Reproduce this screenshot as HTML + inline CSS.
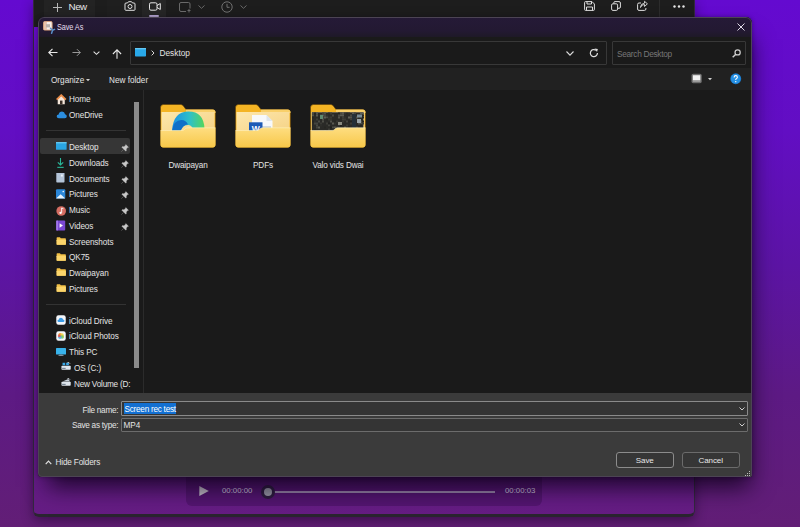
<!DOCTYPE html>
<html><head><meta charset="utf-8">
<style>
*{box-sizing:border-box;margin:0;padding:0}
html,body{width:800px;height:527px;overflow:hidden}
body{position:relative;font-family:"Liberation Sans",sans-serif;color:#e6e6e6;
background:linear-gradient(180deg,rgb(100,10,208) 0%,rgb(98,14,195) 25%,rgb(92,20,165) 50%,rgb(93,26,132) 75%,rgb(98,30,118) 100%)}
svg{position:absolute;overflow:visible}
.t{position:absolute;white-space:nowrap;font-size:8.2px;line-height:10px;color:#e4e4e4}
/* snip window */
#snip{position:absolute;left:33px;top:0;width:662px;height:517px;border-radius:0 0 6px 6px;
border:1px solid #33283f;border-bottom:3px solid #2a2530;border-top:0;box-shadow:0 4px 12px rgba(20,0,30,.45);background:rgba(120,25,180,.2)}
#snipbar{position:absolute;left:0;top:0;width:660px;height:27px;background:#1d1d1d}
#player{position:absolute;left:152px;top:460px;width:356px;height:46px;border-radius:6px;background:rgba(30,0,50,.25)}
/* dialog */
#dlg{position:absolute;left:38px;top:17px;width:714px;height:460px;border-radius:6px 6px 2px 4px;overflow:hidden;
background:#1b1b1b;box-shadow:0 0 4px rgba(10,0,20,.4),4px 16px 22px -6px rgba(10,0,20,.8)}
#dlg::after{content:"";position:absolute;left:0;top:0;right:0;bottom:0;border:1px solid #4c4454;border-radius:6px 6px 2px 4px;pointer-events:none}
#title{position:absolute;left:0;top:0;width:714px;height:20px;background:linear-gradient(180deg,#251a37 0%,#231932 70%,#1e1927 100%)}
#navrow{position:absolute;left:0;top:20px;width:714px;height:31px;background:#1a1a1a}
#toolrow{position:absolute;left:0;top:51px;width:714px;height:22px;background:#212121}
#pane{position:absolute;left:0;top:73px;width:105px;height:303px;background:#1a1a1a;overflow:hidden}
#content{position:absolute;left:105px;top:73px;width:609px;height:303px;background:#1a1a1a;border-left:1px solid #2b2b2b}
#bottom{position:absolute;left:0;top:376px;width:714px;height:84px;background:#3b3b3b}
.box{position:absolute;border:1px solid #383838;background:#1a1a1a;border-radius:1px}
.inp{position:absolute;border:1px solid #6c6c6c;background:#343434;border-radius:1px}
.btn{position:absolute;border:1px solid #6b6b6b;background:#363636;border-radius:3px;text-align:center;font-size:8px;letter-spacing:-0.1px;line-height:16px;color:#e8e8e8}
.row{position:absolute;left:0;width:93px;height:15px;overflow:hidden}
.row .ic{position:absolute;left:18px;top:2px}
.row .t{left:31px;top:2px;letter-spacing:-0.1px}
.pin{position:absolute;left:83px;top:3px}
.sep{position:absolute;left:8px;width:80px;height:1px;background:#333}
.fold{position:absolute;top:13.5px;width:56px;height:44px}
.fl{position:absolute;top:71.3px;width:75px;text-align:center;font-size:8.2px;letter-spacing:-0.15px;line-height:10px;color:#e4e4e4;white-space:nowrap}
</style></head><body>

<svg width="0" height="0" style="position:absolute">
 <defs>
  <linearGradient id="gfront" x1="0" y1="0" x2="0" y2="1"><stop offset="0" stop-color="#fedd80"/><stop offset="1" stop-color="#f7c849"/></linearGradient>
  <linearGradient id="gback" x1="0" y1="0" x2="1" y2="1"><stop offset="0" stop-color="#fde7ac"/><stop offset="1" stop-color="#f5d285"/></linearGradient>
  <linearGradient id="gedge" x1="0" y1="0" x2="1" y2="0"><stop offset="0" stop-color="#1b8fe6"/><stop offset=".55" stop-color="#2fc0c8"/><stop offset="1" stop-color="#55d65a"/></linearGradient>
  <symbol id="folderback" viewBox="0 0 56 44">
   <path d="M0.5,3.5 Q0.5,0.5 3.5,0.5 H20.5 Q22,0.5 23,1.5 L26,5.5 H52.5 Q55.5,5.5 55.5,8.5 V40 Q55.5,43.5 52.5,43.5 H3.5 Q0.5,43.5 0.5,40 Z" fill="#f4b424" stroke="#5a3c08" stroke-width=".6"/>
   <path d="M26,5.5 H52.5 Q55.5,5.5 55.5,8.5 V9 H26 Z" fill="#f9d06a"/>
   <rect x="1.5" y="8" width="53" height="22" fill="url(#gback)"/>
  </symbol>
  <symbol id="folderfront" viewBox="0 0 56 44">
   <path d="M0.5,26.5 H22 Q23.5,26.5 24.5,25.5 L25.5,24.5 Q26.5,23.8 28,23.8 H55.5 V40.5 Q55.5,43.5 52.5,43.5 H3.5 Q0.5,43.5 0.5,40.5 Z" fill="url(#gfront)"/>
   <path d="M0.5,26.5 H22 Q23.5,26.5 24.5,25.5 L25.5,24.5 Q26.5,23.8 28,23.8 H55.5" fill="none" stroke="#fff2c0" stroke-width=".6"/>
  </symbol>
 </defs>
</svg>

<div id="snip">
  <div id="snipbar">
    <div style="position:absolute;left:10px;top:0;width:51px;height:27px;background:#232323"></div>
    <div style="position:absolute;left:73px;top:0;width:35px;height:27px;background:#1f1f1f"></div>
    <div style="position:absolute;left:108px;top:0;width:24px;height:27px;background:#262626"></div>
    <!-- plus -->
    <svg style="left:19px;top:3px" width="9" height="9" viewBox="0 0 9 9"><path d="M4.5,0 V9 M0,4.5 H9" stroke="#b8b8b8" stroke-width="1"/></svg>
    <div class="t" style="left:34.5px;top:1px;font-size:9.8px;letter-spacing:-0.45px;line-height:12px;color:#e8e8e8">New</div>
    <!-- camera -->
    <svg style="left:90px;top:1px" width="12" height="10" viewBox="0 0 12 10"><path d="M1,3 Q1,2 2,2 H3.5 L4.5,0.7 H7.5 L8.5,2 H10 Q11,2 11,3 V8.5 Q11,9.3 10,9.3 H2 Q1,9.3 1,8.5 Z" fill="none" stroke="#e2e2e2" stroke-width="1"/><circle cx="6" cy="5.5" r="2" fill="none" stroke="#e2e2e2" stroke-width="1"/></svg>
    <!-- video -->
    <svg style="left:115px;top:2px" width="12" height="9" viewBox="0 0 12 9"><rect x="0.5" y="0.8" width="7.5" height="7.4" rx="1.4" fill="none" stroke="#e6e6e6" stroke-width="1"/><path d="M8,3.5 L11.3,1.5 V7.5 L8,5.5" fill="none" stroke="#e6e6e6" stroke-width="1"/></svg>
    <div style="position:absolute;left:115px;top:15px;width:10px;height:2px;border-radius:1px;background:#b9a9d6"></div>
    <!-- rect snip -->
    <svg style="left:145px;top:1.5px" width="12" height="11" viewBox="0 0 12 11"><path d="M11,6.5 V2 Q11,0.5 9.5,0.5 H2 Q0.5,0.5 0.5,2 V8 Q0.5,9.5 2,9.5 H7" fill="none" stroke="#6a6a6a" stroke-width="1"/><path d="M8.5,8.5 H11.5 M10,7 V10.5" stroke="#6a6a6a" stroke-width="1"/></svg>
    <svg style="left:164px;top:4.5px" width="7" height="4" viewBox="0 0 7 4"><path d="M0.5,0.5 L3.5,3.3 L6.5,0.5" fill="none" stroke="#6a6a6a" stroke-width="1"/></svg>
    <!-- clock -->
    <svg style="left:187px;top:1px" width="12" height="12" viewBox="0 0 12 12"><circle cx="6" cy="6" r="5.2" fill="none" stroke="#707070" stroke-width="1"/><path d="M6,2.8 V6.3 H8.6" fill="none" stroke="#707070" stroke-width="1"/></svg>
    <svg style="left:206px;top:4.5px" width="7" height="4" viewBox="0 0 7 4"><path d="M0.5,0.5 L3.5,3.3 L6.5,0.5" fill="none" stroke="#6a6a6a" stroke-width="1"/></svg>
    <!-- right icons -->
    <svg style="left:550px;top:1px" width="11" height="10" viewBox="0 0 11 10"><path d="M0.6,1.5 Q0.6,0.6 1.5,0.6 H8 L10.4,3 V8.5 Q10.4,9.4 9.5,9.4 H1.5 Q0.6,9.4 0.6,8.5 Z M3,0.6 V3 H7.5 V0.6 M2.5,9.4 V6 H8.5 V9.4" fill="none" stroke="#dedede" stroke-width="1"/></svg>
    <svg style="left:577px;top:1px" width="10" height="10" viewBox="0 0 10 10"><rect x="0.6" y="2.8" width="6" height="6.6" rx="1.3" fill="none" stroke="#dedede" stroke-width="1"/><path d="M2.8,2.5 V1.8 Q2.8,0.6 4,0.6 H8 Q9.4,0.6 9.4,2 V6 Q9.4,7.3 8,7.3 H7" fill="none" stroke="#dedede" stroke-width="1"/></svg>
    <svg style="left:603px;top:1px" width="11" height="10" viewBox="0 0 11 10"><path d="M4,2 H2 Q0.6,2 0.6,3.4 V8 Q0.6,9.4 2,9.4 H7.5 Q8.9,9.4 8.9,8 V7" fill="none" stroke="#dedede" stroke-width="1"/><path d="M3.5,6.5 Q4,3.5 7.5,3.5 V5.5 L10.4,2.8 L7.5,0.3 V2.2 Q3.5,2.5 3.5,6.5 Z" fill="none" stroke="#dedede" stroke-width="0.9"/></svg>
    <div style="position:absolute;left:625px;top:0;width:1px;height:17px;background:#2c2c2c"></div>
    <svg style="left:639px;top:5px" width="12" height="3" viewBox="0 0 12 3"><circle cx="1.5" cy="1.5" r="1.2" fill="#e6e6e6"/><circle cx="6" cy="1.5" r="1.2" fill="#e6e6e6"/><circle cx="10.5" cy="1.5" r="1.2" fill="#e6e6e6"/></svg>
  </div>
  <div id="player">
    <svg style="left:13px;top:26.3px" width="10" height="10" viewBox="0 0 10 10"><path d="M0.3,0 L9.8,5 L0.3,10 Z" fill="#c7c1cc"/></svg>
    <div class="t" style="left:36px;top:26px;font-size:7.8px;color:#d6cfe0">00:00:00</div>
    <div style="position:absolute;left:87px;top:31px;width:222px;height:1.5px;background:#9c88ad"></div>
    <div style="position:absolute;left:75px;top:25px;width:14px;height:14px;border-radius:50%;background:#2e1d40"></div>
    <div style="position:absolute;left:78px;top:28px;width:8px;height:8px;border-radius:50%;background:#9a9aa8"></div>
    <div class="t" style="left:319px;top:26px;font-size:7.8px;color:#d6cfe0">00:00:03</div>
  </div>
</div>

<div id="dlg">
  <div id="title">
    <svg style="left:5px;top:3.5px" width="12" height="13" viewBox="0 0 12 13"><rect x="0.5" y="0.5" width="8.6" height="8.6" rx="1.2" fill="#f6efea" stroke="#d9a27a" stroke-width=".9"/><rect x="0.9" y="0.9" width="3" height="7.8" fill="#e2b090" opacity=".7"/><rect x="3" y="3.2" width="4" height="3.2" fill="#b9b0aa"/><path d="M7.5,7.2 L9.6,9.3 M9.6,9.3 L11.6,8.4 M9.6,9.3 L8.6,12.2" stroke="#5a8fc8" stroke-width="1.5" fill="none" stroke-linecap="round"/></svg>
    <div class="t" style="left:18.5px;top:5px;font-size:8.8px;letter-spacing:-0.1px;color:#e6dfee;transform:scaleX(0.83);transform-origin:0 0">Save As</div>
    <svg style="left:699px;top:6px" width="8" height="8" viewBox="0 0 8 8"><path d="M0.5,0.5 L7.5,7.5 M7.5,0.5 L0.5,7.5" stroke="#e0dae6" stroke-width="1"/></svg>
  </div>
  <div id="navrow">
    <svg style="left:10px;top:11px" width="10" height="9" viewBox="0 0 10 9"><path d="M9.5,4.5 H0.8 M4.5,0.8 L0.8,4.5 L4.5,8.2" fill="none" stroke="#e8e8e8" stroke-width="1.1"/></svg>
    <svg style="left:34px;top:11px" width="9" height="9" viewBox="0 0 10 9"><path d="M0.5,4.5 H9.2 M5.5,0.8 L9.2,4.5 L5.5,8.2" fill="none" stroke="#9a9a9a" stroke-width="1.1"/></svg>
    <svg style="left:55px;top:13.5px" width="7" height="4" viewBox="0 0 7 4"><path d="M0.6,0.6 L3.5,3.3 L6.4,0.6" fill="none" stroke="#e0e0e0" stroke-width="1.1"/></svg>
    <svg style="left:74px;top:11.5px" width="10" height="10" viewBox="0 0 10 10"><path d="M5,9.8 V0.9 M0.9,5 L5,0.9 L9.1,5" fill="none" stroke="#e8e8e8" stroke-width="1.1"/></svg>
    <div class="box" style="left:92px;top:4px;width:477px;height:24px"></div>
    <svg style="left:97px;top:11px" width="11" height="9" viewBox="0 0 11 9"><rect x="0" y="0" width="11" height="8.5" rx="0.8" fill="#29a8e8"/><rect x="0" y="0" width="11" height="1.3" fill="#63c8f4"/></svg>
    <svg style="left:113px;top:13px" width="4" height="6" viewBox="0 0 4 6"><path d="M0.6,0.6 L3,3 L0.6,5.4" fill="none" stroke="#d8d8d8" stroke-width="1"/></svg>
    <div class="t" style="left:121.5px;top:11px;font-size:8.3px">Desktop</div>
    <svg style="left:528px;top:13.5px" width="8" height="5" viewBox="0 0 8 5"><path d="M0.5,0.5 L4,4.2 L7.5,0.5" fill="none" stroke="#d8d8d8" stroke-width="1.1"/></svg>
    <svg style="left:551px;top:10.5px" width="10" height="10" viewBox="0 0 9 9"><path d="M7.6,4.5 A3.2,3.2 0 1 1 6.3,2" fill="none" stroke="#dcdcdc" stroke-width="1.1"/><path d="M5,0.4 L8,1 L7.2,3.6 Z" fill="#dcdcdc"/></svg>
    <div class="box" style="left:574px;top:4px;width:134px;height:24px"></div>
    <div class="t" style="left:579px;top:11.5px;font-size:8.3px;letter-spacing:-0.3px;color:#777">Search Desktop</div>
    <svg style="left:693.5px;top:12px" width="9" height="9" viewBox="0 0 8 8"><circle cx="5" cy="3" r="2.3" fill="none" stroke="#cfcfcf" stroke-width="1.1"/><path d="M3.4,4.6 L0.6,7.4" stroke="#cfcfcf" stroke-width="1.3"/></svg>
  </div>
  <div id="toolrow">
    <div class="t" style="left:13px;top:8px;font-size:8.2px">Organize</div>
    <svg style="left:47.5px;top:11px" width="4" height="3" viewBox="0 0 4 3"><path d="M0,0 H4 L2,2.2 Z" fill="#d0d0d0"/></svg>
    <div class="t" style="left:71px;top:8px;font-size:8.2px">New folder</div>
    <svg style="left:652.8px;top:5px" width="11.2" height="11" viewBox="0 0 12 11"><rect x="0.5" y="0.5" width="11" height="10" rx="1.8" fill="#6e6e6e"/><rect x="2" y="2" width="8" height="5.6" fill="#f2f2f2"/><rect x="2" y="7.6" width="8" height="1.4" fill="#a8a8a8"/></svg>
    <svg style="left:670px;top:10px" width="4" height="3" viewBox="0 0 4 3"><path d="M0,0 H4 L2,2.2 Z" fill="#d0d0d0"/></svg>
    <svg style="left:691.8px;top:4.8px" width="11.5" height="11.5" viewBox="0 0 12 12"><circle cx="6" cy="6" r="5.7" fill="#1a74c4"/><circle cx="6" cy="6" r="5" fill="#2490e4"/><path d="M4.3,4.6 Q4.3,2.8 6,2.8 Q7.7,2.8 7.7,4.4 Q7.7,5.3 6.8,5.8 Q6,6.2 6,7.2" fill="none" stroke="#fff" stroke-width="1.2"/><circle cx="6" cy="9" r=".75" fill="#fff"/></svg>
  </div>

  <div id="pane">
    <div style="position:absolute;left:95.5px;top:11.5px;width:5.5px;height:266.5px;background:#8b8b8b"></div>
    <div class="sep" style="top:40.3px"></div>
    <div style="position:absolute;left:2.3px;top:48px;width:89.5px;height:15.75px;background:#363636;border-radius:2px"></div>
    <div class="sep" style="top:213.5px"></div>
    <div class="row" style="top:2.70px"><svg class="ic" style="left:18px;top:1px" width="10.5" height="10.5" viewBox="0 0 11 11"><path d="M1.8,5 L5.5,1.6 L9.2,5 V10.7 H1.8 Z" fill="#f4e6da"/><path d="M0.7,5.8 L5.5,1.1 L10.3,5.8" fill="none" stroke="#ea8c48" stroke-width="1.9" stroke-linejoin="round"/><rect x="4.2" y="6.9" width="2.6" height="3.8" fill="#3a2e28"/></svg><div class="t">Home</div></div>
    <div class="row" style="top:19.38px"><svg class="ic" style="left:17.6px;top:1.5px" width="11.5" height="7.8" viewBox="0 0 11 8"><path d="M2.5,7.5 Q0.3,7.5 0.3,5.5 Q0.3,3.6 2.3,3.5 Q3,0.6 5.8,0.6 Q8.4,0.6 8.9,3.3 Q10.7,3.6 10.7,5.5 Q10.7,7.5 8.6,7.5 Z" fill="#2b8ee0"/></svg><div class="t">OneDrive</div></div>
    <div class="row" style="top:50.94px"><svg class="ic" style="left:18px;top:1.5px" width="10.6" height="8" viewBox="0 0 11 8"><rect x="0" y="0" width="11" height="8" rx=".6" fill="#2aa6e4"/><rect x="0" y="0" width="11" height="1.2" fill="#6fd0f6"/></svg><div class="t">Desktop</div><svg class="pin" width="8" height="8" viewBox="0 0 8 8"><path d="M4.8,0.5 L7.5,3.2 L6.6,3.6 L5.3,5 L5.4,6.6 L4.8,7.2 L0.8,3.2 L1.4,2.6 L3,2.7 L4.4,1.4 Z M2.5,5.5 L0.3,7.7" fill="#c8c8c8" stroke="#c8c8c8" stroke-width=".3"/></svg></div>
    <div class="row" style="top:66.72px"><svg class="ic" style="left:19.2px;top:0.8px" width="7" height="10" viewBox="0 0 7 10"><path d="M3.5,0 V7 M0.8,4.3 L3.5,7 L6.2,4.3" fill="none" stroke="#2ab79a" stroke-width="1.1"/><rect x="0.3" y="8.8" width="6.4" height="1.1" fill="#2ab79a"/></svg><div class="t">Downloads</div><svg class="pin" width="8" height="8" viewBox="0 0 8 8"><path d="M4.8,0.5 L7.5,3.2 L6.6,3.6 L5.3,5 L5.4,6.6 L4.8,7.2 L0.8,3.2 L1.4,2.6 L3,2.7 L4.4,1.4 Z M2.5,5.5 L0.3,7.7" fill="#c8c8c8" stroke="#c8c8c8" stroke-width=".3"/></svg></div>
    <div class="row" style="top:82.50px"><svg class="ic" style="left:18.4px;top:-0.3px" width="8.8" height="11" viewBox="0 0 9 11"><rect x="0.3" y="0.3" width="8.4" height="10.4" rx=".8" fill="#b4c4d8"/><rect x="5" y="2.5" width="2" height="2" fill="#eef3f8"/></svg><div class="t">Documents</div><svg class="pin" width="8" height="8" viewBox="0 0 8 8"><path d="M4.8,0.5 L7.5,3.2 L6.6,3.6 L5.3,5 L5.4,6.6 L4.8,7.2 L0.8,3.2 L1.4,2.6 L3,2.7 L4.4,1.4 Z M2.5,5.5 L0.3,7.7" fill="#c8c8c8" stroke="#c8c8c8" stroke-width=".3"/></svg></div>
    <div class="row" style="top:98.28px"><svg class="ic" style="left:17.8px;top:0.3px" width="9.3" height="9.8" viewBox="0 0 10 10"><rect x="0" y="0" width="10" height="10" rx="1" fill="#2a86d8"/><path d="M0,10 L5,5.3 L10,10 Z" fill="#e8f2fb"/><circle cx="7.8" cy="2.4" r=".9" fill="#e8f2fb"/></svg><div class="t">Pictures</div><svg class="pin" width="8" height="8" viewBox="0 0 8 8"><path d="M4.8,0.5 L7.5,3.2 L6.6,3.6 L5.3,5 L5.4,6.6 L4.8,7.2 L0.8,3.2 L1.4,2.6 L3,2.7 L4.4,1.4 Z M2.5,5.5 L0.3,7.7" fill="#c8c8c8" stroke="#c8c8c8" stroke-width=".3"/></svg></div>
    <div class="row" style="top:114.06px"><svg class="ic" style="left:18px;top:1.5px" width="10.4" height="10" viewBox="0 0 11 11"><circle cx="5.5" cy="5.5" r="5.3" fill="#d56d62"/><path d="M6,2.2 V7.3 M6,2.2 L8,3" stroke="#fff" stroke-width="1"/><circle cx="4.8" cy="7.5" r="1.3" fill="#fff"/></svg><div class="t">Music</div><svg class="pin" width="8" height="8" viewBox="0 0 8 8"><path d="M4.8,0.5 L7.5,3.2 L6.6,3.6 L5.3,5 L5.4,6.6 L4.8,7.2 L0.8,3.2 L1.4,2.6 L3,2.7 L4.4,1.4 Z M2.5,5.5 L0.3,7.7" fill="#c8c8c8" stroke="#c8c8c8" stroke-width=".3"/></svg></div>
    <div class="row" style="top:129.84px"><svg class="ic" style="left:18.4px;top:-0.2px" width="9.5" height="11" viewBox="0 0 10 11"><rect x="0.3" y="0.3" width="9.4" height="10.4" rx="1" fill="#7b48d4"/><rect x="0.3" y="0.3" width="1.6" height="10.4" fill="#a77ef0"/><path d="M3.8,3.2 L7.3,5.5 L3.8,7.8 Z" fill="#fff"/></svg><div class="t">Videos</div><svg class="pin" width="8" height="8" viewBox="0 0 8 8"><path d="M4.8,0.5 L7.5,3.2 L6.6,3.6 L5.3,5 L5.4,6.6 L4.8,7.2 L0.8,3.2 L1.4,2.6 L3,2.7 L4.4,1.4 Z M2.5,5.5 L0.3,7.7" fill="#c8c8c8" stroke="#c8c8c8" stroke-width=".3"/></svg></div>
    <div class="row" style="top:145.62px"><svg class="ic" style="left:18px;top:1.25px" width="10.5" height="8" viewBox="0 0 11 9"><path d="M0.3,1 Q0.3,0.3 1,0.3 H4 L5,1.5 H10 Q10.7,1.5 10.7,2.2 V8 Q10.7,8.7 10,8.7 H1 Q0.3,8.7 0.3,8 Z" fill="#f1bf45"/><rect x="0.3" y="3" width="10.4" height="5.7" rx=".6" fill="#fbd56c"/></svg><div class="t">Screenshots</div></div>
    <div class="row" style="top:161.40px"><svg class="ic" style="left:18px;top:1.25px" width="10.5" height="8" viewBox="0 0 11 9"><path d="M0.3,1 Q0.3,0.3 1,0.3 H4 L5,1.5 H10 Q10.7,1.5 10.7,2.2 V8 Q10.7,8.7 10,8.7 H1 Q0.3,8.7 0.3,8 Z" fill="#f1bf45"/><rect x="0.3" y="3" width="10.4" height="5.7" rx=".6" fill="#fbd56c"/></svg><div class="t">QK75</div></div>
    <div class="row" style="top:177.18px"><svg class="ic" style="left:18px;top:1.25px" width="10.5" height="8" viewBox="0 0 11 9"><path d="M0.3,1 Q0.3,0.3 1,0.3 H4 L5,1.5 H10 Q10.7,1.5 10.7,2.2 V8 Q10.7,8.7 10,8.7 H1 Q0.3,8.7 0.3,8 Z" fill="#f1bf45"/><rect x="0.3" y="3" width="10.4" height="5.7" rx=".6" fill="#fbd56c"/></svg><div class="t">Dwaipayan</div></div>
    <div class="row" style="top:192.96px"><svg class="ic" style="left:18px;top:1.25px" width="10.5" height="8" viewBox="0 0 11 9"><path d="M0.3,1 Q0.3,0.3 1,0.3 H4 L5,1.5 H10 Q10.7,1.5 10.7,2.2 V8 Q10.7,8.7 10,8.7 H1 Q0.3,8.7 0.3,8 Z" fill="#f1bf45"/><rect x="0.3" y="3" width="10.4" height="5.7" rx=".6" fill="#fbd56c"/></svg><div class="t">Pictures</div></div>
    <div class="row" style="top:224.52px"><svg class="ic" style="left:18.4px;top:0.9px" width="10" height="10" viewBox="0 0 11 11"><rect x="0.3" y="0.3" width="10.4" height="10.4" rx="2.4" fill="#f4f6fa"/><path d="M3.2,7.8 Q1.6,7.8 1.6,6.4 Q1.6,5.2 2.9,5.1 Q3.3,3 5.4,3 Q7.4,3 7.8,4.9 Q9.3,5.1 9.3,6.4 Q9.3,7.8 7.8,7.8 Z" fill="#3a9be6"/></svg><div class="t">iCloud Drive</div></div>
    <div class="row" style="top:240.30px"><svg class="ic" style="left:18.4px;top:0.6px" width="10" height="10" viewBox="0 0 11 11"><rect x="0.3" y="0.3" width="10.4" height="10.4" rx="2.4" fill="#f4f6fa"/><circle cx="4.5" cy="4.3" r="2" fill="#f2a23a"/><circle cx="6.6" cy="4.6" r="2" fill="#f0d040" opacity=".85"/><circle cx="6.8" cy="6.6" r="2" fill="#7cc850" opacity=".85"/><circle cx="4.4" cy="6.8" r="2" fill="#4ab0e8" opacity=".85"/><circle cx="3.6" cy="5.4" r="1.6" fill="#e8504a" opacity=".8"/></svg><div class="t">iCloud Photos</div></div>
    <div class="row" style="top:256.08px"><svg class="ic" style="left:18.4px;top:1.5px" width="10" height="8" viewBox="0 0 10 8"><rect x="0" y="0" width="10" height="6.6" rx=".6" fill="#38b2ea"/><rect x="3.5" y="6.6" width="3" height="0.8" fill="#7a8fa0"/><rect x="2.5" y="7.3" width="5" height=".7" fill="#9ab0c0"/></svg><div class="t">This PC</div></div>
    <div class="row" style="top:271.86px"><svg class="ic" style="left:23.4px;top:0.5px" width="10.2" height="8" viewBox="0 0 11 9"><rect x="0.3" y="4.3" width="10.4" height="4.5" rx=".8" fill="#dfe6ee"/><rect x="1" y="6.6" width="4" height="1" fill="#5a6a7a"/><path d="M1.5,0.8 H4.5 V3.6 H1.5 Z M5.6,0.8 H8.6 V3.6 H5.6 Z" fill="#3aa8e8"/><path d="M7,0.5 Q9,0 10,2" stroke="#dfe6ee" stroke-width=".8" fill="none"/></svg><div class="t" style="left:36px">OS (C:)</div></div>
    <div class="row" style="top:287.64px"><svg class="ic" style="left:23.4px;top:0.5px" width="10.2" height="8" viewBox="0 0 11 9"><rect x="0.3" y="4.3" width="10.4" height="4.5" rx=".8" fill="#dfe6ee"/><rect x="1" y="6.6" width="4" height="1" fill="#5a6a7a"/><path d="M1.5,3.8 L8,1 L10,3.8 Z" fill="#c8d2dc"/><path d="M7,0.5 Q9,0 10,2" stroke="#dfe6ee" stroke-width=".8" fill="none"/></svg><div class="t" style="left:36px;letter-spacing:-0.2px">New Volume (D:</div></div>
    <div class="row" style="top:303.42px"><svg class="ic" style="left:20px;top:0px" width="4" height="3" viewBox="0 0 4 3"><path d="M0,3 Q2,0 4,3Z" fill="#888"/></svg></div>
    </div>

  <div id="content">
    <!-- folder 1 -->
    <svg class="fold" style="left:15.8px" width="56" height="44" viewBox="0 0 56 44">
      <use href="#folderback"/>
      <path d="M12,27 Q13,7.5 28.5,7.5 Q44,7.5 44.5,25 H33 Q31.5,21 28,21 Q22,21 19,27 Z" fill="url(#gedge)"/>
      <path d="M12,27 Q13.5,16 21.5,16 Q26,16 28,20.5 Q24,19.5 20.5,27 Z" fill="#0f6fc8"/>
    </svg>
    <svg class="fold" style="left:15.8px" width="56" height="44" viewBox="0 0 56 44"><use href="#folderfront"/></svg>
    <!-- folder 2 -->
    <svg class="fold" style="left:90.8px" width="56" height="44" viewBox="0 0 56 44">
      <use href="#folderback"/>
      <path d="M17,11 H31.5 L37.5,17 V27 H17 Z" fill="#f7f9fb"/>
      <path d="M31.5,11 V17 H37.5 Z" fill="#dfe6ee"/>
      <rect x="26" y="22.5" width="10" height="1.3" fill="#a9bcd0"/>
      <rect x="14" y="18.3" width="13.5" height="9" fill="#1d5bb6"/>
      <text x="20.8" y="27.8" font-family="Liberation Sans" font-size="8.5" font-weight="bold" fill="#fff" text-anchor="middle">W</text>
    </svg>
    <svg class="fold" style="left:90.8px" width="56" height="44" viewBox="0 0 56 44"><use href="#folderfront"/></svg>
    <!-- folder 3 -->
    <svg class="fold" style="left:165.8px" width="56" height="44" viewBox="0 0 56 44">
      <use href="#folderback"/>
      <rect x="1.8" y="8.3" width="51.6" height="19" fill="#2a2a27"/><rect x="2" y="8.5" width="2" height="2" fill="rgb(71,71,65)"/><rect x="2" y="10.5" width="2" height="2" fill="rgb(80,80,73)"/><rect x="2" y="12.5" width="2" height="2" fill="rgb(39,39,35)"/><rect x="2" y="16.5" width="2" height="2" fill="rgb(37,37,34)"/><rect x="2" y="26.5" width="2" height="2" fill="rgb(45,45,41)"/><rect x="4" y="8.5" width="2" height="2" fill="rgb(37,37,34)"/><rect x="4" y="16.5" width="2" height="2" fill="rgb(48,48,44)"/><rect x="4" y="18.5" width="2" height="2" fill="rgb(69,69,63)"/><rect x="4" y="24.5" width="2" height="2" fill="rgb(38,38,34)"/><rect x="6" y="8.5" width="2" height="2" fill="rgb(84,84,77)"/><rect x="6" y="10.5" width="2" height="2" fill="rgb(89,89,81)"/><rect x="6" y="14.5" width="2" height="2" fill="rgb(61,61,56)"/><rect x="6" y="18.5" width="2" height="2" fill="rgb(68,68,62)"/><rect x="6" y="20.5" width="2" height="2" fill="rgb(73,73,67)"/><rect x="6" y="22.5" width="2" height="2" fill="rgb(66,66,60)"/><rect x="8" y="12.5" width="2" height="2" fill="rgb(39,39,35)"/><rect x="8" y="16.5" width="2" height="2" fill="rgb(74,74,68)"/><rect x="8" y="20.5" width="2" height="2" fill="rgb(41,41,37)"/><rect x="8" y="22.5" width="2" height="2" fill="rgb(90,90,82)"/><rect x="8" y="26.5" width="2" height="2" fill="rgb(69,69,63)"/><rect x="10" y="10.5" width="2" height="2" fill="rgb(79,79,72)"/><rect x="10" y="18.5" width="2" height="2" fill="rgb(57,57,52)"/><rect x="10" y="20.5" width="2" height="2" fill="rgb(46,46,42)"/><rect x="12" y="8.5" width="2" height="2" fill="rgb(65,65,59)"/><rect x="12" y="10.5" width="2" height="2" fill="rgb(85,85,78)"/><rect x="12" y="12.5" width="2" height="2" fill="rgb(65,65,59)"/><rect x="12" y="14.5" width="2" height="2" fill="rgb(75,75,69)"/><rect x="12" y="16.5" width="2" height="2" fill="rgb(78,78,71)"/><rect x="14" y="8.5" width="2" height="2" fill="rgb(77,77,70)"/><rect x="14" y="10.5" width="2" height="2" fill="rgb(70,70,64)"/><rect x="14" y="12.5" width="2" height="2" fill="rgb(95,95,87)"/><rect x="14" y="22.5" width="2" height="2" fill="rgb(38,38,34)"/><rect x="14" y="26.5" width="2" height="2" fill="rgb(73,73,67)"/><rect x="16" y="10.5" width="2" height="2" fill="rgb(49,49,45)"/><rect x="16" y="12.5" width="2" height="2" fill="rgb(76,76,69)"/><rect x="16" y="14.5" width="2" height="2" fill="rgb(39,39,35)"/><rect x="16" y="18.5" width="2" height="2" fill="rgb(62,62,57)"/><rect x="16" y="22.5" width="2" height="2" fill="rgb(44,44,40)"/><rect x="18" y="8.5" width="2" height="2" fill="rgb(43,43,39)"/><rect x="18" y="12.5" width="2" height="2" fill="rgb(50,50,46)"/><rect x="18" y="14.5" width="2" height="2" fill="rgb(56,56,51)"/><rect x="18" y="18.5" width="2" height="2" fill="rgb(33,33,30)"/><rect x="18" y="20.5" width="2" height="2" fill="rgb(68,68,62)"/><rect x="18" y="22.5" width="2" height="2" fill="rgb(41,41,37)"/><rect x="18" y="24.5" width="2" height="2" fill="rgb(63,63,57)"/><rect x="20" y="8.5" width="2" height="2" fill="rgb(58,58,53)"/><rect x="20" y="12.5" width="2" height="2" fill="rgb(58,58,53)"/><rect x="20" y="14.5" width="2" height="2" fill="rgb(54,54,49)"/><rect x="20" y="16.5" width="2" height="2" fill="rgb(81,81,74)"/><rect x="20" y="22.5" width="2" height="2" fill="rgb(33,33,30)"/><rect x="20" y="26.5" width="2" height="2" fill="rgb(54,54,49)"/><rect x="22" y="10.5" width="2" height="2" fill="rgb(74,74,68)"/><rect x="22" y="18.5" width="2" height="2" fill="rgb(91,91,83)"/><rect x="22" y="22.5" width="2" height="2" fill="rgb(74,74,68)"/><rect x="22" y="24.5" width="2" height="2" fill="rgb(40,40,36)"/><rect x="22" y="26.5" width="2" height="2" fill="rgb(45,45,41)"/><rect x="24" y="16.5" width="2" height="2" fill="rgb(40,40,36)"/><rect x="24" y="18.5" width="2" height="2" fill="rgb(51,51,46)"/><rect x="24" y="22.5" width="2" height="2" fill="rgb(89,89,81)"/><rect x="24" y="24.5" width="2" height="2" fill="rgb(48,48,44)"/><rect x="24" y="26.5" width="2" height="2" fill="rgb(90,90,82)"/><rect x="26" y="12.5" width="2" height="2" fill="rgb(43,43,39)"/><rect x="26" y="16.5" width="2" height="2" fill="rgb(54,54,49)"/><rect x="26" y="22.5" width="2" height="2" fill="rgb(60,60,55)"/><rect x="26" y="26.5" width="2" height="2" fill="rgb(83,83,76)"/><rect x="28" y="8.5" width="2" height="2" fill="rgb(37,37,34)"/><rect x="28" y="10.5" width="2" height="2" fill="rgb(75,75,69)"/><rect x="28" y="12.5" width="2" height="2" fill="rgb(83,83,76)"/><rect x="28" y="16.5" width="2" height="2" fill="rgb(49,49,45)"/><rect x="28" y="18.5" width="2" height="2" fill="rgb(32,32,29)"/><rect x="28" y="20.5" width="2" height="2" fill="rgb(53,53,48)"/><rect x="28" y="24.5" width="2" height="2" fill="rgb(90,90,82)"/><rect x="28" y="26.5" width="2" height="2" fill="rgb(45,45,41)"/><rect x="30" y="8.5" width="2" height="2" fill="rgb(71,71,65)"/><rect x="30" y="10.5" width="2" height="2" fill="rgb(91,91,83)"/><rect x="30" y="12.5" width="2" height="2" fill="rgb(43,43,39)"/><rect x="30" y="18.5" width="2" height="2" fill="rgb(42,42,38)"/><rect x="30" y="20.5" width="2" height="2" fill="rgb(33,33,30)"/><rect x="30" y="24.5" width="2" height="2" fill="rgb(94,94,86)"/><rect x="30" y="26.5" width="2" height="2" fill="rgb(55,55,50)"/><rect x="32" y="8.5" width="2" height="2" fill="rgb(87,87,80)"/><rect x="32" y="10.5" width="2" height="2" fill="rgb(91,91,83)"/><rect x="32" y="12.5" width="2" height="2" fill="rgb(61,61,56)"/><rect x="32" y="14.5" width="2" height="2" fill="rgb(63,63,57)"/><rect x="32" y="16.5" width="2" height="2" fill="rgb(55,55,50)"/><rect x="32" y="22.5" width="2" height="2" fill="rgb(39,39,35)"/><rect x="32" y="26.5" width="2" height="2" fill="rgb(68,68,62)"/><rect x="34" y="8.5" width="2" height="2" fill="rgb(49,49,45)"/><rect x="34" y="12.5" width="2" height="2" fill="rgb(47,47,43)"/><rect x="34" y="14.5" width="2" height="2" fill="rgb(58,58,53)"/><rect x="34" y="22.5" width="2" height="2" fill="rgb(85,85,78)"/><rect x="36" y="8.5" width="2" height="2" fill="rgb(41,41,37)"/><rect x="36" y="16.5" width="2" height="2" fill="rgb(67,67,61)"/><rect x="36" y="20.5" width="2" height="2" fill="rgb(59,59,54)"/><rect x="38" y="8.5" width="2" height="2" fill="rgb(46,46,42)"/><rect x="38" y="12.5" width="2" height="2" fill="rgb(95,95,87)"/><rect x="38" y="16.5" width="2" height="2" fill="rgb(37,37,34)"/><rect x="38" y="22.5" width="2" height="2" fill="rgb(32,32,29)"/><rect x="40" y="10.5" width="2" height="2" fill="rgb(73,73,67)"/><rect x="40" y="12.5" width="2" height="2" fill="rgb(83,83,76)"/><rect x="40" y="14.5" width="2" height="2" fill="rgb(64,64,58)"/><rect x="40" y="16.5" width="2" height="2" fill="rgb(35,35,32)"/><rect x="40" y="18.5" width="2" height="2" fill="rgb(60,60,55)"/><rect x="40" y="24.5" width="2" height="2" fill="rgb(69,69,63)"/><rect x="42" y="8.5" width="2" height="2" fill="rgb(94,94,86)"/><rect x="42" y="12.5" width="2" height="2" fill="rgb(32,32,29)"/><rect x="42" y="16.5" width="2" height="2" fill="rgb(94,94,86)"/><rect x="42" y="18.5" width="2" height="2" fill="rgb(54,54,49)"/><rect x="42" y="20.5" width="2" height="2" fill="rgb(61,61,56)"/><rect x="42" y="22.5" width="2" height="2" fill="rgb(43,43,39)"/><rect x="42" y="24.5" width="2" height="2" fill="rgb(85,85,78)"/><rect x="42" y="26.5" width="2" height="2" fill="rgb(80,80,73)"/><rect x="44" y="8.5" width="2" height="2" fill="rgb(69,69,63)"/><rect x="44" y="14.5" width="2" height="2" fill="rgb(74,74,68)"/><rect x="44" y="22.5" width="2" height="2" fill="rgb(78,78,71)"/><rect x="44" y="24.5" width="2" height="2" fill="rgb(66,66,60)"/><rect x="46" y="12.5" width="2" height="2" fill="rgb(76,76,69)"/><rect x="46" y="22.5" width="2" height="2" fill="rgb(65,65,59)"/><rect x="48" y="16.5" width="2" height="2" fill="rgb(49,49,45)"/><rect x="48" y="18.5" width="2" height="2" fill="rgb(79,79,72)"/><rect x="48" y="24.5" width="2" height="2" fill="rgb(95,95,87)"/><rect x="50" y="8.5" width="2" height="2" fill="rgb(94,94,86)"/><rect x="50" y="10.5" width="2" height="2" fill="rgb(32,32,29)"/><rect x="50" y="16.5" width="2" height="2" fill="rgb(76,76,69)"/><rect x="50" y="18.5" width="2" height="2" fill="rgb(78,78,71)"/><rect x="50" y="20.5" width="2" height="2" fill="rgb(36,36,33)"/><rect x="50" y="26.5" width="2" height="2" fill="rgb(38,38,34)"/><rect x="52" y="8.5" width="2" height="2" fill="rgb(94,94,86)"/><rect x="52" y="10.5" width="2" height="2" fill="rgb(41,41,37)"/><rect x="52" y="12.5" width="2" height="2" fill="rgb(38,38,34)"/><rect x="52" y="16.5" width="2" height="2" fill="rgb(39,39,35)"/><rect x="52" y="18.5" width="2" height="2" fill="rgb(60,60,55)"/><rect x="52" y="26.5" width="2" height="2" fill="rgb(66,66,60)"/><rect x="10" y="11" width="3" height="4" fill="#5f8a70"/><rect x="42" y="10" width="4" height="14" fill="#253038"/><rect x="47" y="10.5" width="5" height="3" fill="#7a8c94"/><rect x="47" y="15" width="4" height="4" fill="#9aa4a8"/><rect x="28" y="18" width="4" height="3" fill="#8a8a80"/>
    </svg>
    <svg class="fold" style="left:165.8px" width="56" height="44" viewBox="0 0 56 44"><use href="#folderfront"/></svg>
    <div class="fl" style="left:6.5px">Dwaipayan</div>
    <div class="fl" style="left:81.5px">PDFs</div>
    <div class="fl" style="left:156.5px">Valo vids Dwai</div>
  </div>

  <div id="bottom">
    <div class="t" style="left:0;width:80.3px;text-align:right;top:12.5px;letter-spacing:-0.25px">File name:</div>
    <div class="t" style="left:0;width:80.3px;text-align:right;top:27.6px;letter-spacing:-0.25px">Save as type:</div>
    <div class="inp" style="left:83px;top:8px;width:627px;height:14.5px;border-color:#8a8a8a"></div>
    <div style="position:absolute;left:85.7px;top:10.2px;width:52.3px;height:10.9px;background:#1370d2"></div>
    <div class="t" style="left:86.5px;top:12.3px;color:#fff;letter-spacing:-0.25px">Screen rec test</div>
    <svg style="left:701px;top:14px" width="6" height="4" viewBox="0 0 6 4"><path d="M0.5,0.5 L3,3 L5.5,0.5" fill="none" stroke="#d0d0d0" stroke-width="1"/></svg>
    <div class="inp" style="left:83px;top:24.5px;width:627px;height:14.5px"></div>
    <div class="t" style="left:85.5px;top:27.6px">MP4</div>
    <svg style="left:701px;top:30px" width="6" height="4" viewBox="0 0 6 4"><path d="M0.5,0.5 L3,3 L5.5,0.5" fill="none" stroke="#d0d0d0" stroke-width="1"/></svg>
    <svg style="left:7.3px;top:67.3px" width="7" height="5" viewBox="0 0 7 5"><path d="M0.7,4.2 L3.5,1.2 L6.3,4.2" fill="none" stroke="#e0e0e0" stroke-width="1.2"/></svg>
    <div class="t" style="left:17.5px;top:64.8px;letter-spacing:-0.15px">Hide Folders</div>
    <div class="btn" style="left:578px;top:59.3px;width:57.5px;height:16px;border-color:#8c8c8c">Save</div>
    <div class="btn" style="left:644px;top:59.3px;width:57.5px;height:16px">Cancel</div>
    <svg style="left:707px;top:78px" width="5" height="5" viewBox="0 0 5 5"><g fill="#bbb"><rect x="4" y="0" width="1" height="1"/><rect x="2" y="2" width="1" height="1"/><rect x="4" y="2" width="1" height="1"/><rect x="0" y="4" width="1" height="1"/><rect x="2" y="4" width="1" height="1"/><rect x="4" y="4" width="1" height="1"/></g></svg>
  </div>
</div>

</body></html>
